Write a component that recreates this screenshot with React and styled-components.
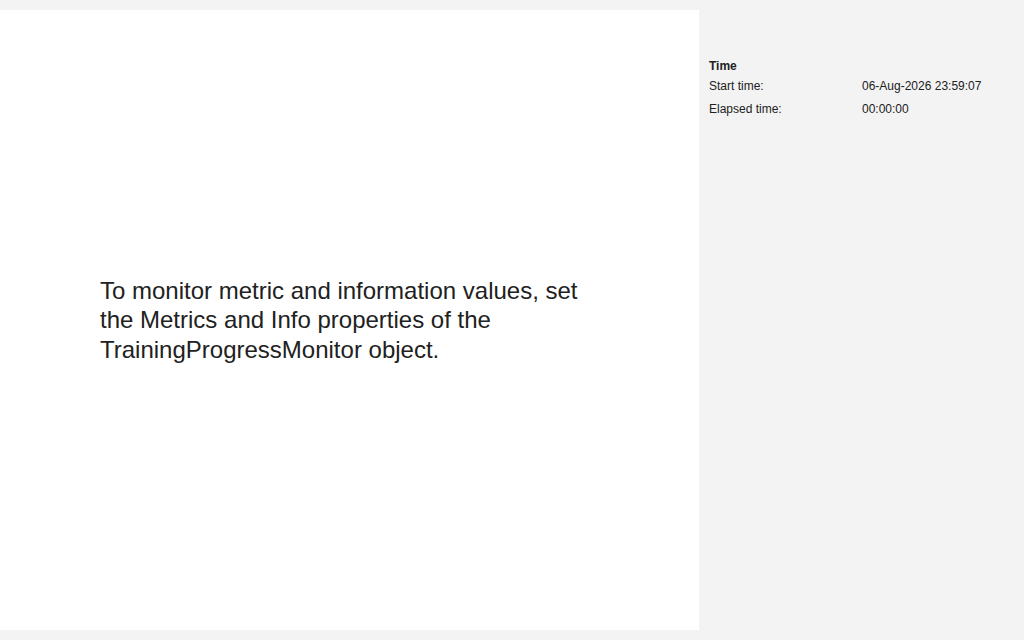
import React from 'react';
import styled, { createGlobalStyle } from 'styled-components';

const Global = createGlobalStyle`
  html, body {
    margin: 0;
    padding: 0;
    background: #f3f3f3;
    font-family: "Liberation Sans", Arial, sans-serif;
    color: #212121;
  }
`

const Page = styled.div`
  display: flex;
  height: 640px;
  box-sizing: border-box;
`

const Main = styled.div`
  width: 699px;
  margin: 10px 0;
  background: #ffffff;
  display: flex;
  align-items: center;
  justify-content: center;
`

const Message = styled.p`
  width: 500px;
  margin: 0 0 0 1px;
  font-size: 24px;
  line-height: 29.5px;
  color: #212121;
`

const Side = styled.div`
  flex: 1;
  padding: 58px 10px 0 10px;
  font-size: 12px;
`

const Heading = styled.div`
  font-weight: bold;
  line-height: 16px;
  margin-bottom: 4px;
`

const Row = styled.div`
  display: grid;
  grid-template-columns: 153px 1fr;
  line-height: 16px;
  margin-bottom: 7px;
`

export default function App() {
  return (
    <>
      <Global />
      <Page>
        <Main>
          <Message>
            To monitor metric and information values, set the Metrics and Info properties of the TrainingProgressMonitor object.
          </Message>
        </Main>
        <Side>
          <Heading>Time</Heading>
          <Row>
            <span>Start time:</span>
            <span>06-Aug-2026 23:59:07</span>
          </Row>
          <Row>
            <span>Elapsed time:</span>
            <span>00:00:00</span>
          </Row>
        </Side>
      </Page>
    </>
  )
}
